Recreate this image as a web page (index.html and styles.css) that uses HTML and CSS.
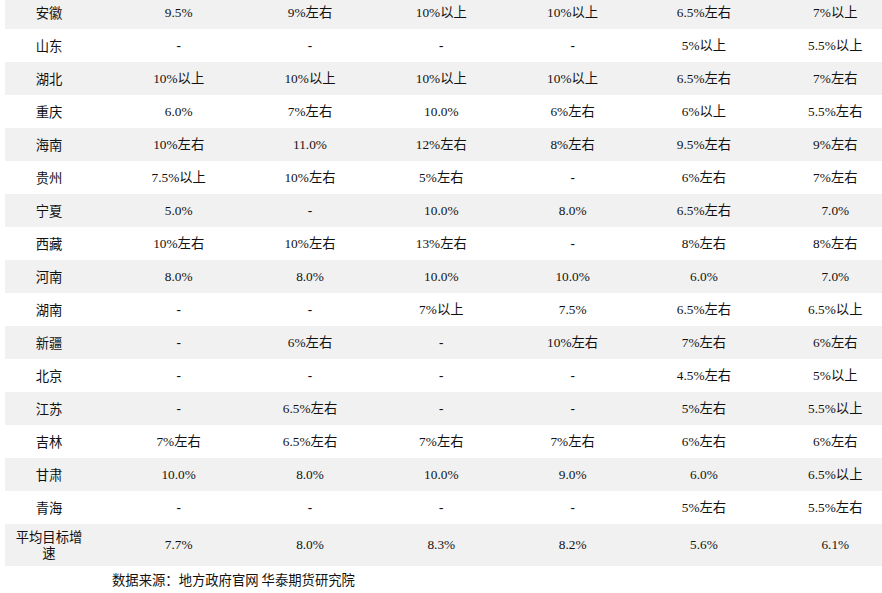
FILE: index.html
```html
<!DOCTYPE html>
<html lang="zh">
<head>
<meta charset="utf-8">
<link rel="stylesheet" href="styles.css">
</head>
<body>
<div class="page">
<table class="grid">
<colgroup><col class="c-name"><col class="c-val"><col class="c-val"><col class="c-val"><col class="c-val"><col class="c-val"><col class="c-val"></colgroup>
<tbody>
<tr class="alt"><td class="name">安徽</td><td>9.5%</td><td>9%左右</td><td>10%以上</td><td>10%以上</td><td>6.5%左右</td><td>7%以上</td></tr>
<tr><td class="name">山东</td><td class="nil">-</td><td class="nil">-</td><td class="nil">-</td><td class="nil">-</td><td>5%以上</td><td>5.5%以上</td></tr>
<tr class="alt"><td class="name">湖北</td><td>10%以上</td><td>10%以上</td><td>10%以上</td><td>10%以上</td><td>6.5%左右</td><td>7%左右</td></tr>
<tr><td class="name">重庆</td><td>6.0%</td><td>7%左右</td><td>10.0%</td><td>6%左右</td><td>6%以上</td><td>5.5%左右</td></tr>
<tr class="alt"><td class="name">海南</td><td>10%左右</td><td>11.0%</td><td>12%左右</td><td>8%左右</td><td>9.5%左右</td><td>9%左右</td></tr>
<tr><td class="name">贵州</td><td>7.5%以上</td><td>10%左右</td><td>5%左右</td><td class="nil">-</td><td>6%左右</td><td>7%左右</td></tr>
<tr class="alt"><td class="name">宁夏</td><td>5.0%</td><td class="nil">-</td><td>10.0%</td><td>8.0%</td><td>6.5%左右</td><td>7.0%</td></tr>
<tr><td class="name">西藏</td><td>10%左右</td><td>10%左右</td><td>13%左右</td><td class="nil">-</td><td>8%左右</td><td>8%左右</td></tr>
<tr class="alt"><td class="name">河南</td><td>8.0%</td><td>8.0%</td><td>10.0%</td><td>10.0%</td><td>6.0%</td><td>7.0%</td></tr>
<tr><td class="name">湖南</td><td class="nil">-</td><td class="nil">-</td><td>7%以上</td><td>7.5%</td><td>6.5%左右</td><td>6.5%以上</td></tr>
<tr class="alt"><td class="name">新疆</td><td class="nil">-</td><td>6%左右</td><td class="nil">-</td><td>10%左右</td><td>7%左右</td><td>6%左右</td></tr>
<tr><td class="name">北京</td><td class="nil">-</td><td class="nil">-</td><td class="nil">-</td><td class="nil">-</td><td>4.5%左右</td><td>5%以上</td></tr>
<tr class="alt"><td class="name">江苏</td><td class="nil">-</td><td>6.5%左右</td><td class="nil">-</td><td class="nil">-</td><td>5%左右</td><td>5.5%以上</td></tr>
<tr><td class="name">吉林</td><td>7%左右</td><td>6.5%左右</td><td>7%左右</td><td>7%左右</td><td>6%左右</td><td>6%左右</td></tr>
<tr class="alt"><td class="name">甘肃</td><td>10.0%</td><td>8.0%</td><td>10.0%</td><td>9.0%</td><td>6.0%</td><td>6.5%以上</td></tr>
<tr><td class="name">青海</td><td class="nil">-</td><td class="nil">-</td><td class="nil">-</td><td class="nil">-</td><td>5%左右</td><td>5.5%左右</td></tr>
<tr class="alt total"><td class="name">平均目标增速</td><td>7.7%</td><td>8.0%</td><td>8.3%</td><td>8.2%</td><td>5.6%</td><td>6.1%</td></tr>
</tbody>
</table>
<p class="source">数据来源：地方政府官网 华泰期货研究院</p>
</div>
</body>
</html>
```
FILE: styles.css
```css
html, body {
  margin: 0;
  padding: 0;
  overflow: hidden;
  background: #ffffff;
}
body {
  width: 882px;
  height: 593px;
  font-family: "Liberation Serif", "Noto Sans CJK SC", serif;
  font-size: 13.33px;
  color: #111111;
}
.page {
  padding-left: 5px;
  margin-top: -4px;
}
.grid {
  border-collapse: collapse;
  table-layout: fixed;
  width: 896px;
}
.c-name { width: 108px; }
.c-val { width: 131.3px; }
.grid td {
  height: 33px;
  padding: 0;
  text-align: center;
  vertical-align: middle;
  line-height: 16px;
  white-space: nowrap;
}
.grid td.nil {
  font-weight: bold;
}
.grid td.name {
  padding: 0 28px 0 8px;
  white-space: normal;
  font-family: "Noto Sans CJK SC", sans-serif;
}
.grid tr.alt td {
  background: #f1f1f1;
}
.grid tr.total td {
  height: 42px;
}
.source {
  margin: 5px 0 0 107px;
  line-height: 18px;
  font-family: "Noto Sans CJK SC", sans-serif;
}
```
